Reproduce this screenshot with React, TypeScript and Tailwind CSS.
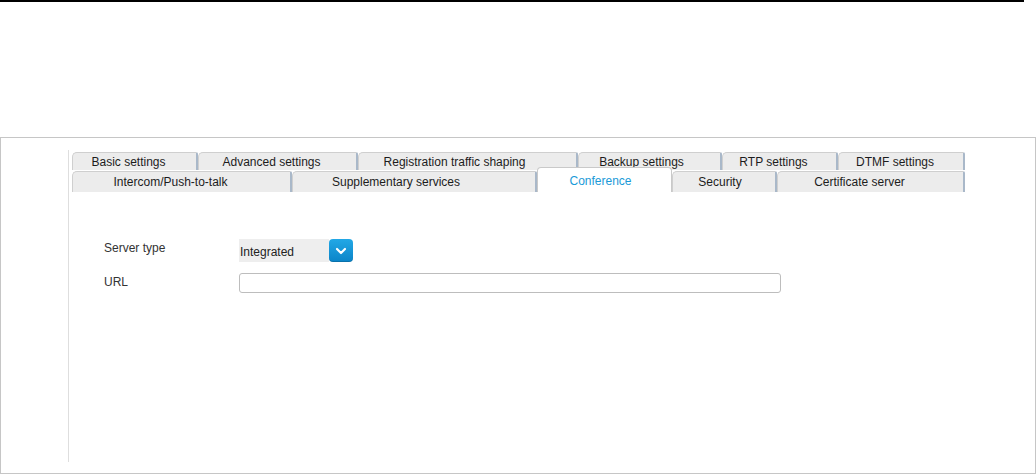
import React from "react";

const row1 = [
  { label: "Basic settings", w: "w-[126px] pr-[12px]" },
  { label: "Advanced settings", w: "w-[160px] pr-[12px]" },
  { label: "Registration traffic shaping", w: "w-[220px] pr-[26px]" },
  { label: "Backup settings", w: "w-[144px] pr-[16px]" },
  { label: "RTP settings", w: "w-[116px] pr-[12px]" },
  { label: "DTMF settings", w: "w-[127px] pr-[12px]" },
];

const row2 = [
  { label: "Intercom/Push-to-talk", w: "w-[220px] pr-[22px]" },
  { label: "Supplementary services", w: "w-[245px] pr-[36px]" },
  { label: "Conference", w: "w-[135px] pr-[8px]", active: true },
  { label: "Security", w: "w-[105px] pr-[8px]" },
  { label: "Certificate server", w: "w-[188px] pr-[22px]" },
];

function Tab({ label, w, active }: { label: string; w: string; active?: boolean }) {
  if (active) {
    return (
      <div
        className={`${w} relative z-10 -mt-[4px] h-[25px] flex items-center justify-center bg-white border-t border-l border-r border-[#c9c9c9] rounded-t-[4px] text-[#1a9ad8] pt-[1px]`}
      >
        {label}
      </div>
    );
  }
  return (
    <div
      className={`${w} h-full flex items-center justify-center bg-[#ececec] border-t border-l border-[#cfcfcf] border-r-2 border-r-[#a9b8c9] rounded-tl-[5px] rounded-tr-[2px] text-[#1c1c1c]`}
    >
      {label}
    </div>
  );
}

export default function App() {
  return (
    <div
      className="w-[1036px] h-[475px] bg-white overflow-hidden"
      style={{ fontFamily: '"Liberation Sans", Arial, sans-serif' }}
    >
      <div className="w-[1024px] h-[2px] bg-black" />
      <div className="mt-[135px] w-[1036px] h-[337px] border border-[#c6c6c6] flex">
        <div className="w-[68px] mt-[12px] mb-[11px] border-r border-[#dedede] shrink-0" />
        <div className="flex-1 pl-[3px] pt-[14px]">
          <div className="w-[893px] text-[12px] leading-none">
            <div className="flex h-[18px]">
              {row1.map((t) => (
                <Tab key={t.label} label={t.label} w={t.w} />
              ))}
            </div>
            <div className="flex h-[21px] items-end mt-[1px]">
              {row2.map((t) => (
                <Tab key={t.label} label={t.label} w={t.w} active={t.active} />
              ))}
            </div>
          </div>

          <div className="mt-[47px] text-[12px] text-[#333]">
            <div className="flex items-center h-[23px]">
              <div className="w-[167px] pl-[32px] -mt-[6px]">Server type</div>
              <div className="flex items-center">
                <div className="w-[90px] h-[23px] bg-[#eeeeee] flex items-center pl-[1px] pt-[3px] text-[#222]">
                  Integrated
                </div>
                <div className="w-[24px] h-[23px] rounded-[4px] bg-gradient-to-b from-[#22a8e6] to-[#0a84c8] flex items-center justify-center shadow-[inset_0_-1px_0_rgba(0,0,0,0.15)]">
                  <svg width="12" height="8" viewBox="0 0 12 8">
                    <path d="M2 2 L6 6 L10 2" stroke="white" strokeWidth="2.2" fill="none" strokeLinecap="round" strokeLinejoin="round" />
                  </svg>
                </div>
              </div>
            </div>
            <div className="flex items-center mt-[11px] h-[20px]">
              <div className="w-[167px] pl-[32px] -mt-[2px]">URL</div>
              <div className="w-[542px] h-[20px] border border-[#bdbdbd] rounded-[3px] bg-white" />
            </div>
          </div>
        </div>
      </div>
    </div>
  );
}
